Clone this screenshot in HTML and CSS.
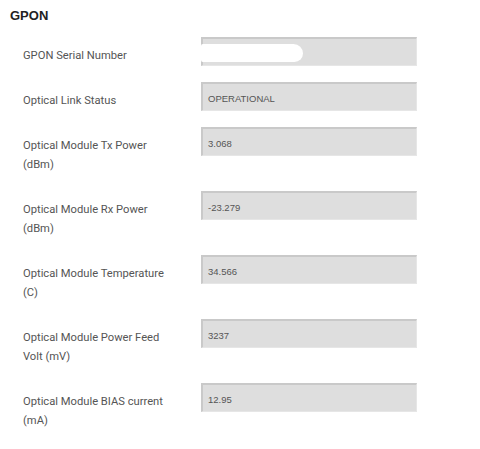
FILE: index.html
```html
<!DOCTYPE html>
<html>
<head>
<meta charset="utf-8">
<link rel="stylesheet" href="styles.css">
</head>
<body>
<div class="page">
  <h2 class="title">GPON</h2>
  <div class="rows">
    <div class="row">
      <div class="label">GPON Serial Number</div>
      <div class="value"><div class="redact"></div></div>
    </div>
    <div class="row">
      <div class="label">Optical Link Status</div>
      <div class="value">OPERATIONAL</div>
    </div>
    <div class="row">
      <div class="label">Optical Module Tx Power<br>(dBm)</div>
      <div class="value">3.068</div>
    </div>
    <div class="row">
      <div class="label">Optical Module Rx Power<br>(dBm)</div>
      <div class="value">-23.279</div>
    </div>
    <div class="row">
      <div class="label">Optical Module Temperature<br>(C)</div>
      <div class="value">34.566</div>
    </div>
    <div class="row">
      <div class="label">Optical Module Power Feed<br>Volt (mV)</div>
      <div class="value">3237</div>
    </div>
    <div class="row">
      <div class="label">Optical Module BIAS current<br>(mA)</div>
      <div class="value">12.95</div>
    </div>
  </div>
</div>
</body>
</html>
```
FILE: styles.css
```css
html, body {
  margin: 0;
  padding: 0;
  background: #ffffff;
}
.page {
  padding: 8px 0 0 10px;
  font-family: "Liberation Sans", Arial, sans-serif;
}
.title {
  margin: 0;
  font-size: 13px;
  line-height: 16px;
  font-weight: bold;
  color: #222222;
}
.rows {
  margin-top: 13px;
  padding-left: 13px;
}
.row {
  display: flex;
  align-items: flex-start;
  margin-bottom: 16px;
}
.label {
  width: 178px;
  padding: 9px 0 1px;
  font-family: Roboto, "Liberation Sans", Arial, sans-serif;
  font-size: 11.2px;
  line-height: 19px;
  color: #555555;
}
.value {
  box-sizing: border-box;
  width: 216px;
  height: 29px;
  padding: 9px 0 0 5px;
  background: #dedede;
  border-top: 2px solid #c9c9c9;
  border-left: 2px solid #c9c9c9;
  border-right: 1px solid #e6e6e6;
  border-bottom: 1px solid #e6e6e6;
  font-size: 9.5px;
  line-height: 12px;
  color: #555555;
}
.redact {
  width: 102px;
  height: 18px;
  margin: -4px 0 0 -7px;
  background: #ffffff;
  border-radius: 2px 10px 9px 2px;
  filter: blur(0.6px);
}
```
